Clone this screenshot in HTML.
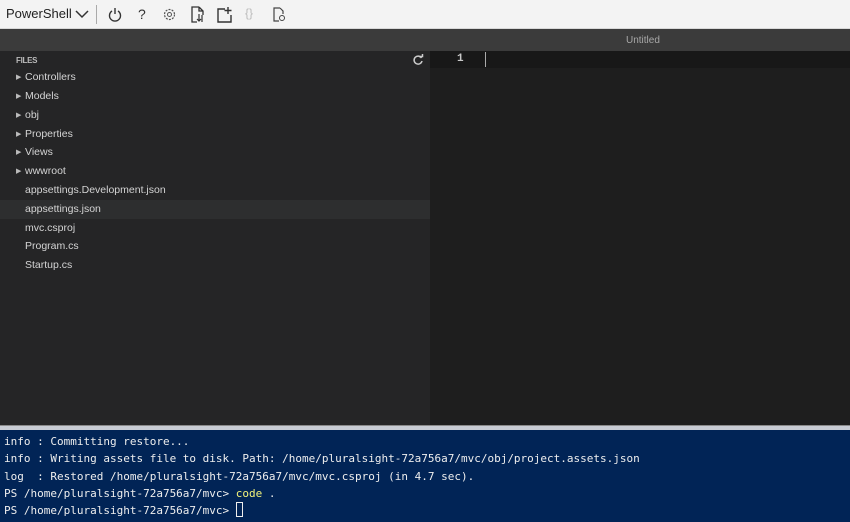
<!DOCTYPE html>
<html><head><style>
*{margin:0;padding:0;box-sizing:border-box}
body{width:850px;height:522px;overflow:hidden;background:#252526;font-family:"Liberation Sans",sans-serif;position:relative}
.tb{position:absolute;left:0;top:0;width:850px;height:29px;background:#f3f3f3;border-bottom:1px solid #d8d8d8}
.tb .ps{position:absolute;left:6px;top:6px;font-size:13px;color:#222}
.tb svg{position:absolute}
.hdr{position:absolute;left:0;top:29px;width:850px;height:22px;background:#3b3b3b}
.hdr span{position:absolute;left:626px;top:6px;font-size:10px;color:#a8a8a8}
.side{position:absolute;left:0;top:51px;width:430px;height:374px;background:#252526}
.files{position:absolute;left:16px;top:5px;font-size:8px;font-weight:bold;color:#bbb;letter-spacing:-0.3px}
.row{position:absolute;left:0;width:430px;height:19px;font-size:10.5px;color:#d4d4d4;padding-left:25px;line-height:19px}
.row.sel{background:#2d2e2f}
.row .ar{position:absolute;left:16px;top:0;font-size:7px;color:#bbb}
.ed{position:absolute;left:430px;top:51px;width:420px;height:374px;background:#1e1e1e}
.ln{position:absolute;left:0;top:0;width:420px;height:17px;background:#181818}
.ln b{position:absolute;left:27px;top:2px;font-size:11px;color:#c8c8c8;font-family:"Liberation Mono",monospace}
.cur{position:absolute;left:55px;top:1px;width:1px;height:15px;background:#aaa}
.sep{position:absolute;left:0;top:425px;width:850px;height:5px;background:#c8ccd4;border-top:1px solid #8a8a8a}
.term{position:absolute;left:0;top:430px;width:850px;height:92px;background:#012456;font-family:"DejaVu Sans Mono","Liberation Mono",monospace;font-size:11px;color:#eee;padding:3px 0 0 4px;line-height:17.3px;white-space:pre}
.y{color:#f2f27a}
</style></head><body>
<div class="tb">
<span class="ps">PowerShell</span>
<svg style="left:75px;top:10px" width="14" height="9"><path d="M1 1l6 6 6-6" stroke="#333" fill="none" stroke-width="1.5"/></svg>
<div style="position:absolute;left:96px;top:5px;width:1px;height:19px;background:#aaa"></div>
<svg style="left:108px;top:7px" width="14" height="15"><path d="M4 4a5.5 5.5 0 1 0 6 0M7 1v6" stroke="#333" fill="none" stroke-width="1.4"/></svg>
<span style="position:absolute;left:138px;top:6px;font-size:14px;color:#333">?</span>
<svg style="left:162px;top:7px" width="15" height="15"><circle cx="7.5" cy="7.5" r="5" stroke="#555" fill="none" stroke-width="1.2" stroke-dasharray="2 1.2"/><circle cx="7.5" cy="7.5" r="2" stroke="#555" fill="none"/></svg>
<svg style="left:190px;top:6px" width="15" height="17"><path d="M9 1H2v15h5M9 1l4 4v4M9 1v4h4" stroke="#333" fill="none" stroke-width="1.3"/><path d="M9 8v7M7 13l2 2 2-2M12 9v7" stroke="#333" fill="none" stroke-width="1.2"/></svg>
<svg style="left:216px;top:6px" width="17" height="17"><path d="M9 3H2v13h13V9" stroke="#333" fill="none" stroke-width="1.4"/><path d="M12 1v7M8.5 4.5h7" stroke="#333" stroke-width="1.4"/></svg>
<span style="position:absolute;left:245px;top:6px;font-size:12px;color:#bbb">{}</span>
<svg style="left:272px;top:7px" width="14" height="15"><path d="M8 1H2v13h5M8 1l3 3v3" stroke="#444" fill="none" stroke-width="1.2"/><circle cx="10" cy="11" r="2.5" stroke="#444" fill="none"/></svg>
</div>
<div class="hdr"><span>Untitled</span></div>
<div class="side">
<div class="files">FILES</div>
<svg style="position:absolute;left:412px;top:3px" width="12" height="12"><path d="M9.5 4A4 4 0 1 0 10 7" stroke="#ccc" fill="none" stroke-width="1.5"/><path d="M7 2.5h3.5V-1" stroke="#ccc" fill="none" stroke-width="1.5"/></svg>
<div class="row" style="top:17px"><span class="ar">▶</span>Controllers</div>
<div class="row" style="top:36px"><span class="ar">▶</span>Models</div>
<div class="row" style="top:55px"><span class="ar">▶</span>obj</div>
<div class="row" style="top:74px"><span class="ar">▶</span>Properties</div>
<div class="row" style="top:92px"><span class="ar">▶</span>Views</div>
<div class="row" style="top:111px"><span class="ar">▶</span>wwwroot</div>
<div class="row" style="top:130px">appsettings.Development.json</div>
<div class="row sel" style="top:149px">appsettings.json</div>
<div class="row" style="top:168px">mvc.csproj</div>
<div class="row" style="top:186px">Program.cs</div>
<div class="row" style="top:205px">Startup.cs</div>
</div>
<div class="ed"><div class="ln"><b>1</b><div class="cur"></div></div></div>
<div class="sep"></div>
<div class="term">info : Committing restore...
info : Writing assets file to disk. Path: /home/pluralsight-72a756a7/mvc/obj/project.assets.json
log  : Restored /home/pluralsight-72a756a7/mvc/mvc.csproj (in 4.7 sec).
PS /home/pluralsight-72a756a7/mvc> <span class="y">code</span> .
PS /home/pluralsight-72a756a7/mvc> <span style="display:inline-block;width:7px;height:15px;border:1px solid #eee;vertical-align:-3px"></span></div>
</body></html>
